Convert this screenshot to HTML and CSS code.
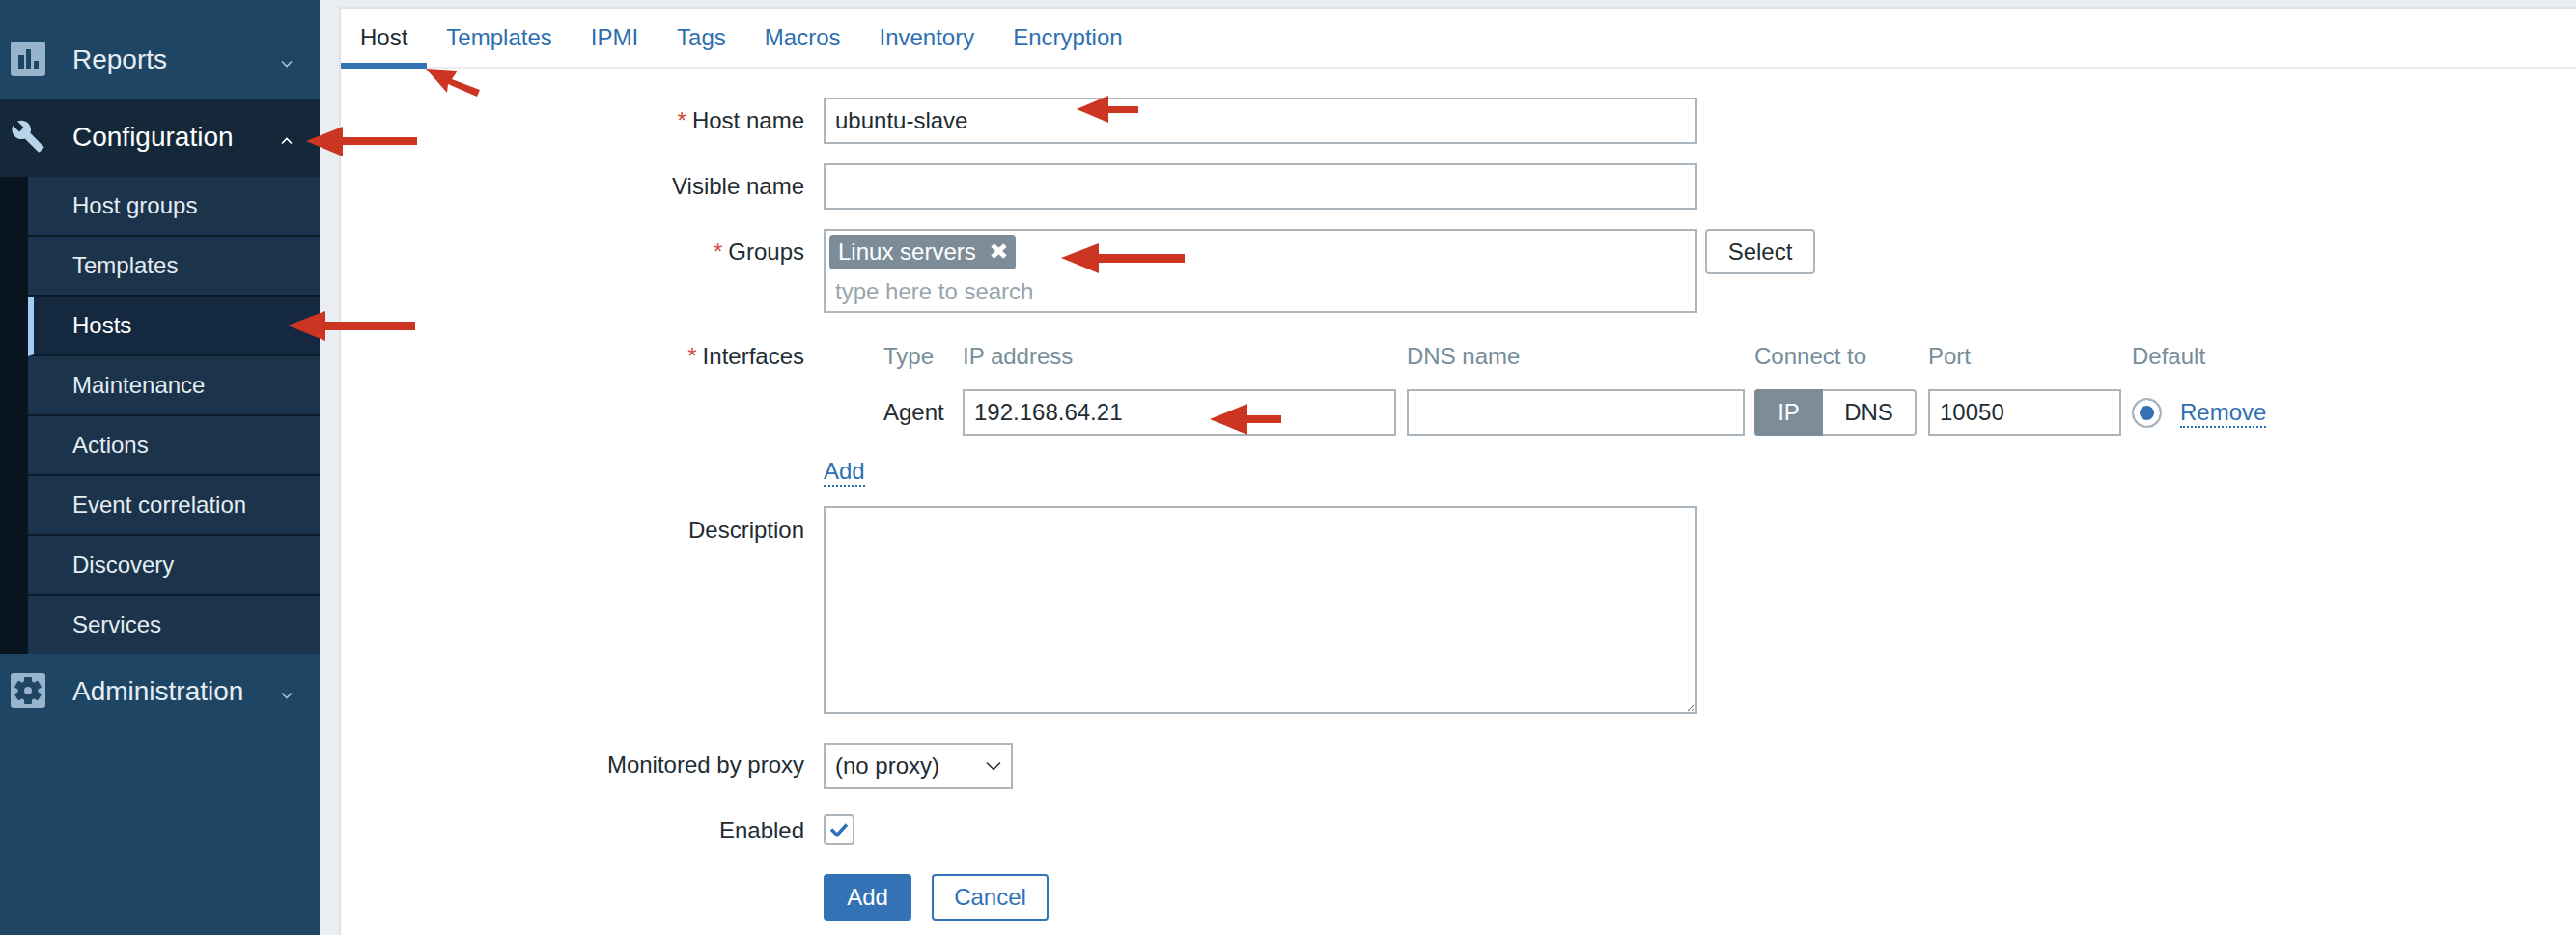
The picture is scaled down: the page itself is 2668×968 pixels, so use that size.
FILE: index.html
```html
<!DOCTYPE html>
<html lang="en">

<head>
  <meta charset="UTF-8" />
  <title>Configuration of hosts</title>
  <link rel="stylesheet" href="styles.css">
</head>

<body>
  <aside class="sidebar">
    <div class="menu-item first">
      <svg class="menu-icon" viewBox="0 0 36 36">
        <rect width="36" height="36" rx="3" fill="#98b3cc" />
        <rect x="8" y="14" width="6" height="14" fill="#1f4565" />
        <rect x="16" y="8" width="5" height="20" fill="#1f4565" />
        <rect x="24" y="20" width="5" height="8" fill="#1f4565" />
      </svg>
      <span class="menu-label">Reports</span>
      <svg class="chevron" viewBox="0 0 12 8">
        <path d="M1 1.5l5 5 5-5" />
      </svg>
    </div>

    <div class="menu-item open">
      <svg class="menu-icon" viewBox="0 0 24 24">
        <path fill="#b7d4ea" d="M22.7 19l-9.1-9.1c.9-2.3.4-5-1.5-6.9-2-2-5-2.4-7.4-1.3L9 6 6 9 1.6 4.7C.4 7.1.9 10.1 2.9 12.1c1.9 1.9 4.6 2.4 6.9 1.5l9.1 9.1c.4.4 1 .4 1.4 0l2.3-2.3c.5-.4.5-1.1.1-1.4z" />
      </svg>
      <span class="menu-label">Configuration</span>
      <svg class="chevron" viewBox="0 0 12 8">
        <path d="M1 6.5l5-5 5 5" />
      </svg>
    </div>

    <ul class="submenu">
      <li>Host groups</li>
      <li>Templates</li>
      <li class="active">Hosts</li>
      <li>Maintenance</li>
      <li>Actions</li>
      <li>Event correlation</li>
      <li>Discovery</li>
      <li>Services</li>
    </ul>

    <div class="menu-item">
      <svg class="menu-icon" viewBox="0 0 36 36">
        <rect width="36" height="36" rx="3" fill="#98b3cc" />
        <g fill="#1f4565">
          <circle cx="18" cy="18" r="10.5" />
          <rect x="14" y="4" width="8" height="28" rx="1" />
          <rect x="14" y="4" width="8" height="28" rx="1" transform="rotate(60 18 18)" />
          <rect x="14" y="4" width="8" height="28" rx="1" transform="rotate(120 18 18)" />
        </g>
        <circle cx="18" cy="18" r="4" fill="#98b3cc" />
      </svg>
      <span class="menu-label">Administration</span>
      <svg class="chevron" viewBox="0 0 12 8">
        <path d="M1 1.5l5 5 5-5" />
      </svg>
    </div>
  </aside>

  <main class="panel">
    <nav class="tabs">
      <a class="tab current">Host</a>
      <a class="tab">Templates</a>
      <a class="tab">IPMI</a>
      <a class="tab">Tags</a>
      <a class="tab">Macros</a>
      <a class="tab">Inventory</a>
      <a class="tab">Encryption</a>
    </nav>

    <form class="host-form">
      <div class="row">
        <label class="row-label"><span class="req">*</span>Host name</label>
        <input class="field wide" type="text" value="ubuntu-slave">
      </div>

      <div class="row row-visible">
        <label class="row-label">Visible name</label>
        <input class="field wide" type="text">
      </div>

      <div class="row row-groups">
        <label class="row-label"><span class="req">*</span>Groups</label>
        <div class="multiselect">
          <span class="tag">Linux servers
            <svg class="tag-x" viewBox="0 0 19 18">
              <path d="M3 3l13 12M16 3l-13 12" />
            </svg>
          </span>
          <span class="placeholder">type here to search</span>
        </div>
        <button class="btn-grey" type="button">Select</button>
      </div>

      <div class="row row-interfaces">
        <label class="row-label"><span class="req">*</span>Interfaces</label>
        <div class="interfaces">
          <span class="head">Type</span>
          <span class="head">IP address</span>
          <span class="head">DNS name</span>
          <span class="head">Connect to</span>
          <span class="head">Port</span>
          <span class="head">Default</span>

          <span>Agent</span>
          <input class="field ip" type="text" value="192.168.64.21">
          <input class="field dns" type="text">
          <div class="toggle"><span class="on">IP</span><span>DNS</span></div>
          <input class="field port" type="text" value="10050">
          <div class="default-cell">
            <span class="radio"></span>
            <a class="dotted">Remove</a>
          </div>
        </div>
      </div>

      <div class="row row-add">
        <span class="row-label"></span>
        <a class="dotted">Add</a>
      </div>

      <div class="row row-desc">
        <label class="row-label">Description</label>
        <textarea class="field wide description"></textarea>
      </div>

      <div class="row row-proxy">
        <label class="row-label">Monitored by proxy</label>
        <div class="select">
          <span>(no proxy)</span>
          <svg viewBox="0 0 16 10">
            <path d="M1 1.500l7 7 7-7" />
          </svg>
        </div>
      </div>

      <div class="row row-enabled">
        <label class="row-label">Enabled</label>
        <span class="checkbox">
          <svg viewBox="0 0 20 16">
            <path d="M2 7.500l6 6 10-11" />
          </svg>
        </span>
      </div>

      <div class="row row-buttons">
        <span class="row-label"></span>
        <button class="btn-add" type="button">Add</button>
        <button class="btn-cancel" type="button">Cancel</button>
      </div>
    </form>
  </main>

  <!-- red annotation arrows drawn over the screenshot -->
  <svg class="arrows" viewBox="0 0 2668 968">
    <polygon points="441,71 474,73 468,82 497,93 494,100 464,87 463,96" />
    <polygon points="317,146 355,131 355,142 432,142 432,150 355,150 355,162" />
    <polygon points="298,337 337,322 337,333 430,333 430,342 337,342 337,353" />
    <polygon points="1115,113 1148,99 1148,110 1179,110 1179,117 1148,117 1148,127" />
    <polygon points="1099,267 1138,252 1138,263 1227,263 1227,272 1138,272 1138,283" />
    <polygon points="1253,434 1292,418 1292,430 1327,430 1327,438 1292,438 1292,450" />
  </svg>
</body>

</html>
```

FILE: styles.css
```css
* {
  box-sizing: border-box;
}

body {
  display: flex;
  height: 968px;
  margin: 0;
  overflow: hidden;
  background: #ebeef0;
  color: #1f2c33;
  font-family: "Liberation Sans", Arial, sans-serif;
  font-size: 24px;
}

/* sidebar */

.sidebar {
  flex: 0 0 331px;
  background: #1f4565;
}

.menu-item {
  display: flex;
  align-items: center;
  height: 80px;
  padding: 0 28px 0 11px;
  color: #e6eef4;
  font-size: 28px;
}

.menu-item.first {
  height: 103px;
  padding-top: 23px;
}

.menu-item.open {
  background: #14283a;
  color: #fff;
}

.menu-icon {
  width: 36px;
  height: 36px;
  margin: -4px 28px 0 0;
}

.menu-label {
  flex: 1;
  margin-top: -2px;
}

.chevron {
  width: 12px;
  height: 8px;
  margin-top: 5px;
  fill: none;
  stroke: #a9c0d3;
  stroke-width: 1.6;
}

.open .chevron {
  stroke: #fff;
}

.submenu {
  margin: 0;
  padding: 0 0 0 29px;
  list-style: none;
  background: #08151e;
}

.submenu li {
  display: flex;
  align-items: center;
  height: 62px;
  padding-left: 46px;
  border-bottom: 2px solid #0b1b2a;
  background: #1b344c;
  color: #e4ecf2;
}

.submenu li:last-child {
  height: 60px;
  border-bottom: none;
}

.submenu li.active {
  padding-left: 40px;
  border-left: 6px solid #a0cdf5;
  background: #142840;
  color: #fff;
}

/* main panel */

.panel {
  flex: 1;
  margin: 7px 0 0 20px;
  border-top: 2px solid #e0e3e6;
  border-left: 2px solid #e0e3e6;
  background: #fff;
}

.tabs {
  display: flex;
  height: 62px;
  border-bottom: 2px solid #ebeef0;
}

.tab {
  height: 62px;
  padding: 16px 20px 0;
  color: #2f6fb0;
}

.tab.current {
  border-bottom: 6px solid #3272b5;
  color: #1f2c33;
}

.host-form {
  padding-top: 30px;
}

.row {
  display: flex;
  align-items: flex-start;
}

.row-label {
  flex: 0 0 480px;
  margin-right: 20px;
  padding-top: 10px;
  text-align: right;
}

.req {
  margin-right: 6px;
  color: #d64a3a;
}

.field {
  height: 48px;
  padding: 0 10px;
  border: 2px solid #acb6bc;
  border-radius: 0;
  background: #fff;
  color: #1f2c33;
  font-family: inherit;
  font-size: 24px;
}

.wide {
  width: 905px;
}

.row-visible {
  margin-top: 20px;
}

.row-groups {
  margin-top: 20px;
}

.multiselect {
  width: 905px;
  height: 87px;
  padding: 4px;
  border: 2px solid #acb6bc;
}

.tag {
  display: inline-flex;
  align-items: center;
  width: 193px;
  height: 36px;
  padding-left: 9px;
  border-radius: 4px;
  background: #7c8d99;
  color: #fff;
}

.tag-x {
  width: 19px;
  height: 18px;
  margin: -2px 8px 0 auto;
  fill: none;
  stroke: #fff;
  stroke-width: 5;
}

.placeholder {
  display: block;
  margin: 9px 0 0 6px;
  color: #9aa5ab;
}

.btn-grey {
  width: 114px;
  height: 47px;
  margin-left: 8px;
  border: 2px solid #acb6bc;
  border-radius: 4px;
  background: #fff;
  color: #1f2c33;
  font-family: inherit;
  font-size: 24px;
}

.row-interfaces {
  margin-top: 31px;
}

.row-interfaces .row-label {
  padding-top: 0;
}

.interfaces {
  display: grid;
  grid-template-columns: 82px 460px 360px 180px 211px auto;
  grid-template-rows: 48px 48px;
  align-items: center;
  margin-left: 62px;
}

.head {
  align-self: start;
  color: #768d99;
}

.ip {
  width: 449px;
}

.dns {
  width: 350px;
}

.port {
  width: 200px;
}

.toggle {
  display: flex;
  width: 168px;
  height: 48px;
  border: 2px solid #acb6bc;
  border-left: none;
  border-radius: 4px;
  text-align: center;
  line-height: 44px;
}

.toggle span {
  flex: 1;
}

.toggle .on {
  flex: 0 0 71px;
  margin: -2px 0;
  border-radius: 4px 0 0 4px;
  background: #7c8d99;
  color: #fff;
  line-height: 48px;
}

.default-cell {
  display: flex;
  align-items: center;
  gap: 19px;
}

.default-cell .dotted {
  margin-top: 3px;
}

.radio {
  width: 31px;
  height: 31px;
  border: 2px solid #acb6bc;
  border-radius: 50%;
  background: #3272b5;
  box-shadow: inset 0 0 0 6px #fff;
}

.dotted {
  padding-bottom: 1px;
  border-bottom: 2px dotted #2f6fb0;
  color: #2f6fb0;
  line-height: 26px;
}

.row-add {
  margin-top: 24px;
}

.row-add .row-label {
  padding: 0;
}

.row-desc {
  margin-top: 20px;
}

.row-desc .row-label {
  padding-top: 11px;
}

.description {
  height: 215px;
  padding: 6px 10px;
  resize: both;
}

.row-proxy {
  margin-top: 30px;
}

.row-proxy .row-label {
  padding-top: 9px;
}

.select {
  display: flex;
  align-items: center;
  justify-content: space-between;
  width: 196px;
  height: 48px;
  padding: 0 10px;
  border: 2px solid #acb6bc;
}

.select svg {
  width: 16px;
  height: 10px;
  fill: none;
  stroke: #1f2c33;
  stroke-width: 1.5;
}

.row-enabled {
  margin-top: 26px;
}

.row-enabled .row-label {
  padding-top: 3px;
}

.checkbox {
  display: flex;
  align-items: center;
  justify-content: center;
  width: 32px;
  height: 32px;
  border: 2px solid #acb6bc;
  border-radius: 4px;
}

.checkbox svg {
  width: 20px;
  height: 16px;
  fill: none;
  stroke: #3272b5;
  stroke-width: 3.5;
}

.row-buttons {
  margin-top: 30px;
}

.btn-add {
  width: 91px;
  height: 48px;
  border: none;
  border-radius: 4px;
  background: #3272b5;
  color: #fff;
  font-family: inherit;
  font-size: 24px;
}

.btn-cancel {
  width: 121px;
  height: 48px;
  margin-left: 21px;
  border: 2px solid #3272b5;
  border-radius: 4px;
  background: #fff;
  color: #3272b5;
  font-family: inherit;
  font-size: 24px;
}

/* annotation layer */

.arrows {
  position: absolute;
  top: 0;
  left: 0;
  width: 2668px;
  height: 968px;
  fill: #cc3522;
  pointer-events: none;
}
```
